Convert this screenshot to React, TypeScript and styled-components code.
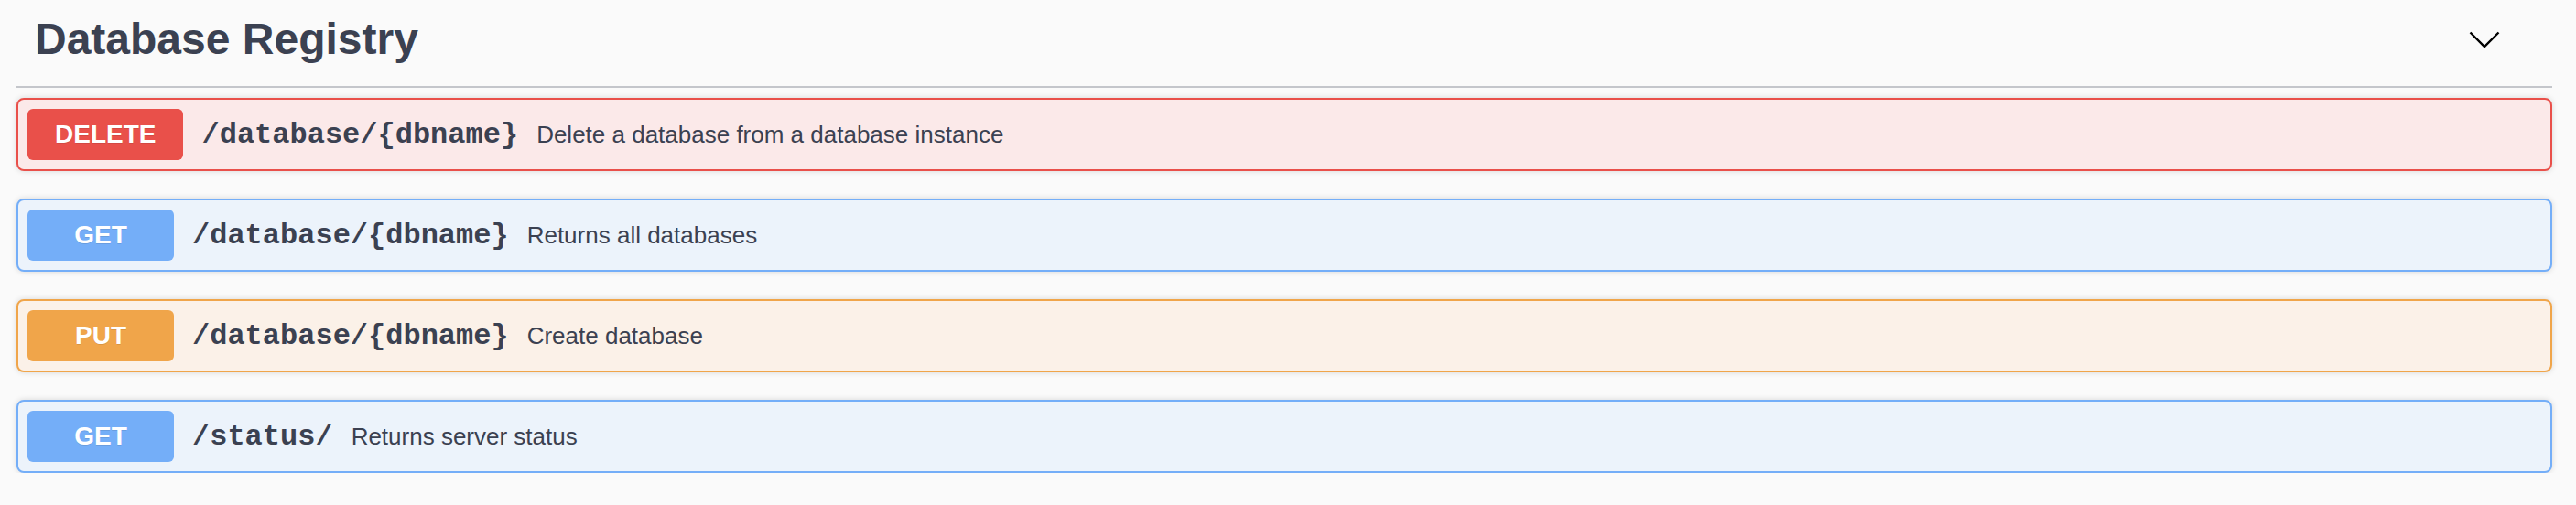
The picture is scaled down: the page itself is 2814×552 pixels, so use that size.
import styled, { createGlobalStyle } from "styled-components";

const GlobalStyle = createGlobalStyle`
    body {
        margin: 0;
        background: #fafafa;
        font-family: "Liberation Sans", Arial, sans-serif;
        color: #3b4151;
    }
`;

const Section = styled.section`
    width: 2770px;
    padding-left: 18px;
`;

const Header = styled.div`
    height: 86px;
    padding: 0 57px 8px 20px;
    display: flex;
    align-items: center;
    justify-content: space-between;
    border-bottom: 2px solid #c4c6cb;
`;

const Title = styled.h4`
    margin: 0;
    font-size: 48px;
    font-weight: 700;
    line-height: 1;
`;

const List = styled.div`
    padding-top: 11px;
    display: flex;
    flex-direction: column;
    gap: 30px;
`;

const colors = {
    DELETE: { main: "#e9504a", bg: "#fbe9e9" },
    GET: { main: "#74aef8", bg: "#ecf3fb" },
    PUT: { main: "#f0a54a", bg: "#fbf1e8" },
};

type Method = keyof typeof colors;

const Block = styled.div<{ $method: Method }>`
    height: 80px;
    box-sizing: border-box;
    padding: 0 10px;
    display: flex;
    align-items: center;
    border: 2px solid ${p => colors[p.$method].main};
    background: ${p => colors[p.$method].bg};
    border-radius: 8px;
    box-shadow: 0 0 6px rgba(0, 0, 0, 0.15);
`;

const Badge = styled.span<{ $method: Method }>`
    min-width: 160px;
    height: 56px;
    padding: 0 30px;
    box-sizing: border-box;
    display: flex;
    align-items: center;
    justify-content: center;
    background: ${p => colors[p.$method].main};
    border-radius: 6px;
    color: #fff;
    font-size: 28px;
    font-weight: 700;
    text-shadow: 0 1px 0 rgba(0, 0, 0, 0.1);
`;

const Path = styled.span`
    padding: 0 20px;
    font-family: "Liberation Mono", "Courier New", monospace;
    font-size: 32px;
    font-weight: 700;
`;

const Desc = styled.span`
    font-size: 26px;
`;

const Chevron = () => (
    <svg width="34" height="19" viewBox="0 0 34 19">
        <polyline points="1.5,1.5 17,17 32.5,1.5" fill="none" stroke="#000" strokeWidth="2.4" />
    </svg>
);

const ops: { method: Method; path: string; summary: string }[] = [
    { method: "DELETE", path: "/database/{dbname}", summary: "Delete a database from a database instance" },
    { method: "GET", path: "/database/{dbname}", summary: "Returns all databases" },
    { method: "PUT", path: "/database/{dbname}", summary: "Create database" },
    { method: "GET", path: "/status/", summary: "Returns server status" },
];

function App() {
    return (
        <>
            <GlobalStyle />
            <Section>
                <Header>
                    <Title>Database Registry</Title>
                    <Chevron />
                </Header>
                <List>
                    {ops.map((op, i) => (
                        <Block key={i} $method={op.method}>
                            <Badge $method={op.method}>{op.method}</Badge>
                            <Path>{op.path}</Path>
                            <Desc>{op.summary}</Desc>
                        </Block>
                    ))}
                </List>
            </Section>
        </>
    );
}

export default App;
